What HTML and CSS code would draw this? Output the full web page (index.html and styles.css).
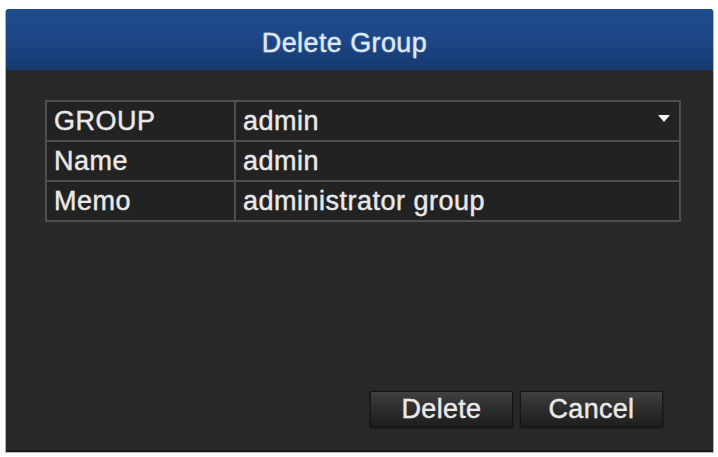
FILE: index.html
```html
<!DOCTYPE html>
<html>
<head>
<meta charset="utf-8">
<link rel="stylesheet" href="styles.css">
</head>
<body>
<div class="dialog">
  <div class="header">Delete Group</div>
  <div class="content">
    <table class="grid">
      <tr>
        <td class="label">GROUP</td>
        <td class="value select">admin<span class="arrow"></span></td>
      </tr>
      <tr>
        <td class="label">Name</td>
        <td class="value">admin</td>
      </tr>
      <tr>
        <td class="label">Memo</td>
        <td class="value">administrator group</td>
      </tr>
    </table>
    <div class="actions">
      <button class="btn">Delete</button>
      <button class="btn">Cancel</button>
    </div>
  </div>
</div>
</body>
</html>
```
FILE: styles.css
```css
html, body {
  margin: 0;
  padding: 0;
  background: #ffffff;
}
body {
  width: 718px;
  height: 457px;
  font-family: "Liberation Sans", Arial, sans-serif;
}
.dialog {
  margin: 9px 0 0 5px;
  width: 709px;
  height: 444px;
  box-sizing: border-box;
  border: 1px solid #b5b5b5;
  border-top: none;
  border-radius: 4px 4px 0 0;
  background: #292929;
  display: flex;
  flex-direction: column;
  overflow: hidden;
}
.header {
  height: 61px;
  flex: none;
  background: linear-gradient(to bottom, #1f4c8c 0%, #1c4584 55%, #163a70 100%);
  color: #dfe8f6;
  font-size: 27px;
  letter-spacing: 0.4px;
  display: flex;
  align-items: center;
  justify-content: center;
  padding: 7px 30px 0 0;
  box-sizing: border-box;
  text-shadow: 0 0 2px rgba(180, 200, 240, 0.5);
  -webkit-text-stroke: 0.3px #dfe8f6;
}
.content {
  flex: 1;
  display: flex;
  flex-direction: column;
  padding: 30px 32px 23px 39px;
  border-bottom: 2px solid #1a1a1a;
}
.grid {
  width: 636px;
  border-collapse: collapse;
  border: 2px solid #4e4e4e;
}
.grid td {
  border: 2px solid #4e4e4e;
  height: 38px;
  padding: 0;
  background: #222222;
  color: #e8e8e8;
  font-size: 27px;
  letter-spacing: 0.5px;
  line-height: 38px;
  text-shadow: 0 0 1px rgba(255, 255, 255, 0.4);
  -webkit-text-stroke: 0.3px #e8e8e8;
}
.grid .label {
  width: 180px;
  padding-left: 7px;
}
.grid .value {
  padding-left: 7px;
}
.select {
  position: relative;
}
.arrow {
  position: absolute;
  right: 9px;
  top: 13px;
  width: 0;
  height: 0;
  border-left: 6px solid transparent;
  border-right: 6px solid transparent;
  border-top: 7px solid #f4f4f4;
}
.actions {
  margin-top: auto;
  display: flex;
  justify-content: flex-end;
  gap: 7px;
  padding-right: 18px;
}
.btn {
  width: 143px;
  height: 36px;
  padding: 0;
  border: 1px solid #141414;
  background: linear-gradient(to bottom, #404040 0%, #2e2e2e 45%, #1e1e1e 100%);
  box-shadow: 0 1px 2px rgba(0, 0, 0, 0.6);
  color: #e8e8e8;
  font-family: "Liberation Sans", Arial, sans-serif;
  font-size: 27px;
  letter-spacing: 0.3px;
  line-height: 34px;
  text-shadow: 0 0 1px rgba(255, 255, 255, 0.4);
  -webkit-text-stroke: 0.3px #e8e8e8;
}
```
